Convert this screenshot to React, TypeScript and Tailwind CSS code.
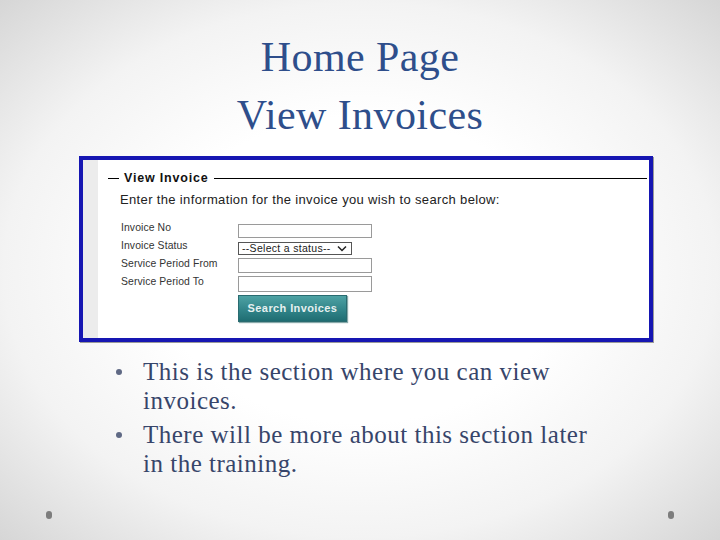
import React from "react";

const sans = { fontFamily: '"Liberation Sans", Arial, sans-serif' };

function Field({ w = "w-[134px]", h = "h-[14px]", mt = "mt-0" }: { w?: string; h?: string; mt?: string }) {
  return <div className={`${w} ${h} ${mt} border border-[#9a9a9a] bg-white`} />;
}

function Bullet({ text, className = "" }: { text: string; className?: string }) {
  return (
    <div className={`flex ${className}`}>
      <div className="w-[30px] flex items-start pt-[12px] pl-[3px]">
        <div className="w-[6px] h-[6px] rounded-full bg-[#5f6984]" />
      </div>
      <div className="w-[462px]">{text}</div>
    </div>
  );
}

export default function App() {
  return (
    <div className="relative w-[720px] h-[540px] overflow-hidden flex flex-col bg-[radial-gradient(ellipse_at_center,#ffffff_40%,#f3f3f3_70%,#d6d6d6_100%)]">
      <div
        className="pt-[28px] text-center text-[42px] leading-[58px] text-[#2e4e8b] tracking-[0.4px]"
        style={{ fontFamily: '"Liberation Serif", "Times New Roman", serif' }}
      >
        <div>Home Page</div>
        <div>View Invoices</div>
      </div>

      <div className="mt-[12px] ml-[79px] w-[574px] h-[186px] border-[4px] border-[#1616b2] shadow-[1px_1px_0_#9a9a9a] flex bg-white" style={sans}>
        <div className="w-[15px] bg-[#ececec]" />
        <div className="flex-1 flex flex-col">
          <div className="mt-[12px] ml-[10px] mr-[2px] flex items-center h-[12px]">
            <div className="w-[11px] h-[1px] bg-black" />
            <span className="ml-[5px] mr-[6px] text-[12.5px] tracking-[0.8px] font-bold text-[#111]">View Invoice</span>
            <div className="flex-1 h-[1px] bg-black" />
          </div>
          <div className="mt-[9px] ml-[22px] text-[13px] tracking-[0.35px] leading-[14px] text-[#222]">
            Enter the information for the invoice you wish to search below:
          </div>
          <div className="flex ml-[23px] mt-[15px]">
            <div className="w-[117px] -mt-[3px] text-[10.4px] tracking-[0.1px] leading-[18px] text-[#333]">
              <div>Invoice No</div>
              <div>Invoice Status</div>
              <div>Service Period From</div>
              <div>Service Period To</div>
            </div>
            <div className="flex flex-col mt-[2px]">
              <Field h="h-[14px]" />
              <div className="mt-[4px] w-[114px] h-[13px] border border-[#555] bg-white flex items-center justify-between pl-[3px] pr-[4px] text-[10.5px] tracking-[0.3px] leading-[11px] text-[#222]">
                <span>--Select a status--</span>
                <svg width="10" height="7" viewBox="0 0 10 7" fill="none">
                  <path d="M1 1.5 L5 5.5 L9 1.5" stroke="#222" strokeWidth="1.5" />
                </svg>
              </div>
              <Field h="h-[15px]" mt="mt-[3px]" />
              <Field h="h-[16px]" mt="mt-[3px]" />
              <div className="mt-[3px] w-[109px] h-[27px] border border-[#2a6b70] bg-[linear-gradient(#4ea2a4,#2f8287_60%,#1f6d72)] flex items-center justify-center text-[11px] tracking-[0.4px] font-bold text-[#e6f0f0] shadow-[1px_1px_1px_#8aa]">
                Search Invoices
              </div>
            </div>
          </div>
        </div>
      </div>

      <div
        className="mt-[15px] ml-[113px] text-[25px] leading-[29px] text-[#37456a] tracking-[0.5px]"
        style={{ fontFamily: '"Liberation Serif", "Times New Roman", serif' }}
      >
        <Bullet text="This is the section where you can view invoices." />
        <Bullet className="mt-[5px]" text="There will be more about this section later in the training." />
      </div>

      <div className="mt-auto mb-[21px] px-[46px] flex justify-between">
        <div className="w-[6px] h-[8px] rounded-full bg-[#7d7d7d]" />
        <div className="w-[6px] h-[8px] rounded-full bg-[#7d7d7d]" />
      </div>
    </div>
  );
}
